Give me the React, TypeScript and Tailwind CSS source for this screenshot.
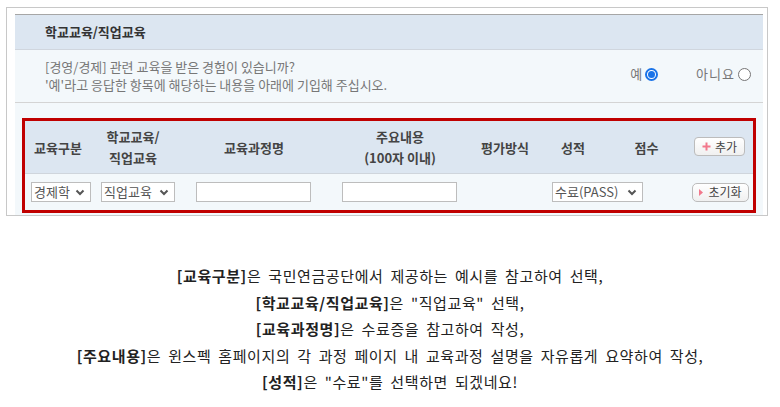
import React from "react";

const Chevron = () => (
  <svg width="10" height="7" viewBox="0 0 10 7" className="shrink-0">
    <polyline points="1.5,1.5 5,5 8.5,1.5" fill="none" stroke="#555" strokeWidth="2" />
  </svg>
);

const Select = ({ w, text, clip }: { w: string; text: string; clip?: string }) => (
  <div className={`${w} h-[20px] border border-[#bdbdbd] bg-white flex items-center pl-[2px] pr-[5px] justify-between text-[13px] text-[#555]`}>
    <span className={`${clip ?? ""} overflow-hidden whitespace-nowrap leading-[18px]`}>{text}</span>
    <Chevron />
  </div>
);

export default function App() {
  return (
    <div className="w-[780px] h-[407px] bg-white overflow-hidden" style={{ fontFamily: '"Noto Sans CJK KR", "Noto Sans", sans-serif' }}>
      <div className="ml-[6px] mt-[7px] w-[762px] border border-[#c8c8c8] pl-[8px] pr-[4px] pt-[6px]">
        <div className="border-t border-[#a6a6a6]">
          <div className="h-[35px] bg-[#dce6f1] border-b border-[#d0d6de] flex items-center pl-[30px] text-[13px] font-bold text-[#333]">
            학교교육/직업교육
          </div>
          <div className="h-[53px] bg-[#f3f8fb] border-b border-[#d4d4d4] flex items-center pl-[30px] pr-[12px] text-[13px] text-[#777]">
            <div className="flex-1 flex flex-col leading-[18px]">
              <div>[경영/경제] 관련 교육을 받은 경험이 있습니까?</div>
              <div>'예'라고 응답한 항목에 해당하는 내용을 아래에 기입해 주십시오.</div>
            </div>
            <div className="flex items-center gap-[3px] mb-[4px]">
              <span>예</span>
              <span className="w-[13px] h-[13px] rounded-full border-2 border-[#1a73e8] flex items-center justify-center bg-white">
                <span className="w-[7px] h-[7px] rounded-full bg-[#1a73e8]" />
              </span>
            </div>
            <div className="flex items-center gap-[3px] ml-[38px] mb-[4px]">
              <span className="[letter-spacing:1px]">아니요</span>
              <span className="w-[13px] h-[13px] rounded-full border border-[#767676] bg-white" />
            </div>
          </div>
          <div className="bg-[#f3f8fb] pt-[15px] px-[7px] pb-[2px]">
            <div className="border-[3px] border-[#c00000]">
              <div className="h-[53px] bg-[#dce6f1] border-b border-[#cfd5dc] flex items-center text-[13px] font-bold text-[#444] leading-[21px]">
                <div className="w-[66px] text-center">교육구분</div>
                <div className="w-[84px] text-center">학교교육/<br />직업교육</div>
                <div className="w-[158px] text-center">교육과정명</div>
                <div className="w-[134px] text-center">주요내용<br />(100자 이내)</div>
                <div className="w-[76px] text-center">평가방식</div>
                <div className="w-[60px] text-center">성적</div>
                <div className="w-[87px] text-center">점수</div>
                <button className="ml-[4px] w-[51px] h-[19px] rounded-[4px] border border-[#bcbcbc] bg-gradient-to-b from-white to-[#f0f0f0] flex items-center justify-center gap-[4px] text-[12px] font-normal text-[#444] mb-[1px]">
                  <svg width="9" height="9" viewBox="0 0 9 9"><path d="M4.5 0.5v8M0.5 4.5h8" stroke="#f2788c" strokeWidth="2" /></svg>
                  <span>추가</span>
                </button>
              </div>
              <div className="h-[36px] bg-[#f3f8fb] flex items-center pl-[6px]">
                <Select w="w-[60px]" text="경제학" clip="w-[37px]" />
                <div className="ml-[10px]"><Select w="w-[74px]" text="직업교육" /></div>
                <div className="ml-[21px] w-[115px] h-[20px] border border-[#bdbdbd] bg-white" />
                <div className="ml-[31px] w-[115px] h-[20px] border border-[#bdbdbd] bg-white" />
                <div className="ml-[95px]"><Select w="w-[91px]" text="수료(PASS)" /></div>
                <button className="ml-[49px] w-[57px] h-[19px] rounded-[5px] border border-[#bcbcbc] bg-gradient-to-b from-white to-[#f0f0f0] flex items-center justify-center gap-[5px] text-[12px] text-[#444]">
                  <svg width="4" height="7" viewBox="0 0 4 7"><path d="M0 0L4 3.5L0 7Z" fill="#f2788c" /></svg>
                  <span>초기화</span>
                </button>
              </div>
            </div>
          </div>
        </div>
      </div>
      <div className="mt-[47px] text-center text-[15px] leading-[26.5px] text-[#222] [word-spacing:3px] tracking-[0.6px]">
        <div><b>[교육구분]</b>은 국민연금공단에서 제공하는 예시를 참고하여 선택,</div>
        <div><b>[학교교육/직업교육]</b>은 "직업교육" 선택,</div>
        <div><b>[교육과정명]</b>은 수료증을 참고하여 작성,</div>
        <div><b>[주요내용]</b>은 윈스펙 홈페이지의 각 과정 페이지 내 교육과정 설명을 자유롭게 요약하여 작성,</div>
        <div><b>[성적]</b>은 "수료"를 선택하면 되겠네요!</div>
      </div>
    </div>
  );
}
